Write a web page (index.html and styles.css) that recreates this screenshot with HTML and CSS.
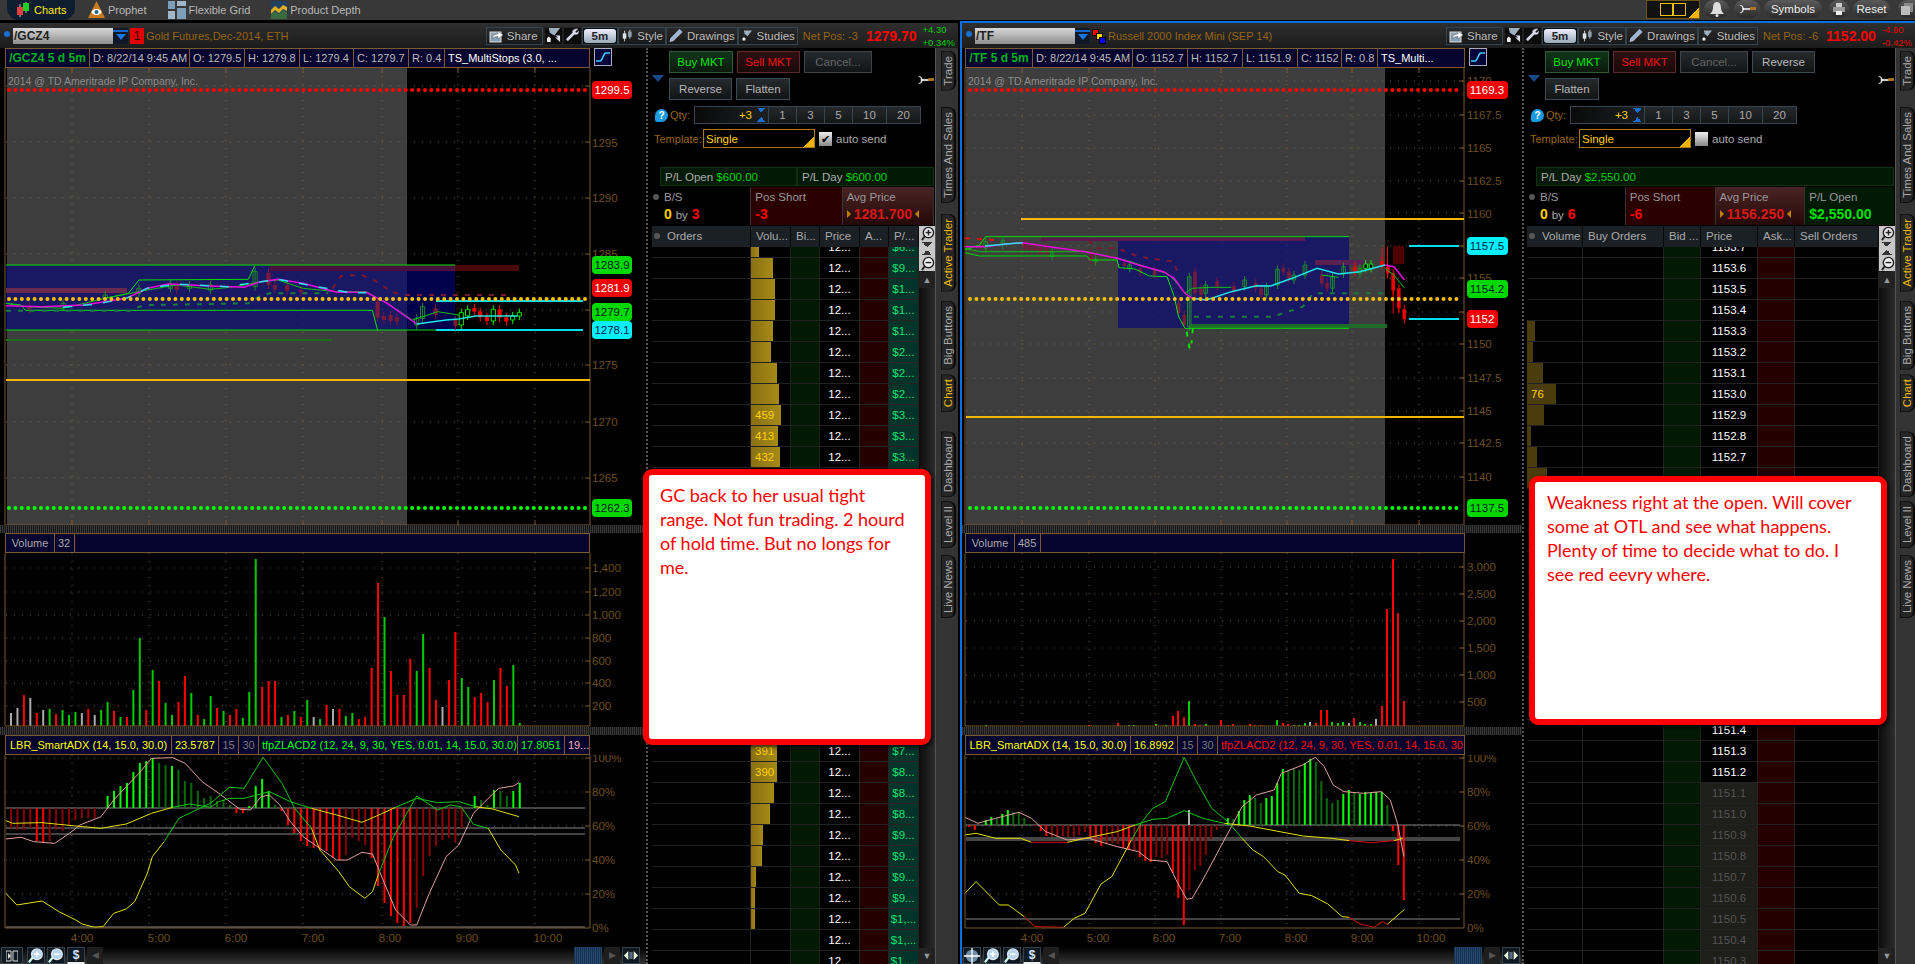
FILE: index.html
```html
<!DOCTYPE html>
<html>
<head>
  <meta charset="utf-8">
  <title>Charts</title>
  <link rel="stylesheet" href="styles.css">
</head>
<body>
  <svg class="defs">
    <symbol id="i-share" viewBox="0 0 14 14"><rect x="1" y="3" width="11" height="10" fill="#8ba0b0" stroke="#ddd"/><path d="M3 10c1-4 3-5 6-5V2l5 4-5 4V7.500C6 7.500 5 8 3 10z" fill="#fff" stroke="#456" stroke-width=".5"/></symbol>
    <symbol id="i-flask" viewBox="0 0 16 16"><path d="M4 1h11L9 9 5 6z" fill="#9fb0bc"/><path d="M4 10l2 2v3H2v-3z" fill="#eee"/></symbol>
    <symbol id="i-tools" viewBox="0 0 16 16"><path d="M3 0h12L9 8 4 5z" fill="#9fb0bc"/><path d="M3 9l2 2v4H1v-4z" fill="#eee"/><path d="M15 15l-5-5h3l-3-2h5z" fill="#dde"/></symbol>
    <symbol id="i-wrench" viewBox="0 0 16 16"><path d="M14 1l-3 3 1 1 3-2c0 3-2 5-5 4l-7 7-2-2 7-7c-1-2 2-5 6-4z" fill="#dde" stroke="#667" stroke-width=".5"/></symbol>
    <symbol id="i-candle" viewBox="0 0 14 14"><path d="M4 1v12M10 0v10" stroke="#cdd"/><rect x="2" y="4" width="4" height="6" fill="#dce4ea"/><rect x="8" y="2" width="4" height="6" fill="#8fa3b0"/></symbol>
    <symbol id="i-pencil" viewBox="0 0 16 16"><path d="M12 1l3 3-10 10-4 1 1-4z" fill="#9db4cf" stroke="#dde" stroke-width=".6"/></symbol>
    <symbol id="i-curve" viewBox="0 0 18 18"><rect x=".5" y=".5" width="17" height="17" fill="#04043a" stroke="#aab"/><path d="M2 13h4c3 0 3-8 6-8h4" fill="none" stroke="#3ad0ff" stroke-width="1.500"/></symbol>
    <symbol id="i-plus" viewBox="0 0 16 16"><circle cx="9" cy="7" r="5.500" fill="#eee" stroke="#222" stroke-width="1.500"/><path d="M6 7h6M9 4v6" stroke="#222" stroke-width="1.500"/><path d="M5 11l-3 4" stroke="#222" stroke-width="2"/></symbol>
    <symbol id="i-minus" viewBox="0 0 16 16"><circle cx="9" cy="7" r="5.500" fill="#eee" stroke="#222" stroke-width="1.500"/><path d="M6 7h6" stroke="#222" stroke-width="1.500"/><path d="M5 11l-3 4" stroke="#222" stroke-width="2"/></symbol>
    <symbol id="i-wr2" viewBox="0 0 18 10"><path d="M1 1c3-1 4 1 5 3h7v2H6c-1 2-2 4-5 3l3-2V3z" fill="#fff" stroke="#333" stroke-width=".5"/><rect x="12" y="3" width="6" height="3" fill="#b07820"/></symbol>
    <symbol id="i-mag-p" viewBox="0 0 18 18"><circle cx="10" cy="7" r="6" fill="#b8d4ea" stroke="#dfeaf2" stroke-width="1.500"/><path d="M7 7h6M10 4v6" stroke="#fff" stroke-width="2"/><path d="M5 11l-4 5" stroke="#cfe" stroke-width="2.500"/></symbol>
    <symbol id="i-mag-m" viewBox="0 0 18 18"><circle cx="10" cy="7" r="6" fill="#b8d4ea" stroke="#dfeaf2" stroke-width="1.500"/><path d="M7 7h6" stroke="#fff" stroke-width="2"/><path d="M5 11l-4 5" stroke="#cfe" stroke-width="2.500"/></symbol>
    <symbol id="i-cross" viewBox="0 0 18 18"><circle cx="9" cy="9" r="7" fill="#6f8da5"/><path d="M9 0v18M0 9h18" stroke="#fff" stroke-width="1.500"/></symbol>
    <symbol id="i-arrows" viewBox="0 0 18 12"><path d="M6 1v10L1 6zM12 1v10l5-5z" fill="#e4f2d8"/><path d="M8 2v8M10 2v8" stroke="#9ac"/></symbol>
  </svg>

  <div class="topbar">
    <a class="nav nav-on"><svg width="16" height="16" viewBox="0 0 16 16"><path d="M5 2v13M11 0v11" stroke="#bbb"/><rect x="2" y="5" width="6" height="8" fill="#e04040"/><rect x="8" y="1" width="6" height="8" fill="#20d020"/></svg>Charts</a>
    <a class="nav"><svg width="17" height="18" viewBox="0 0 17 18"><path d="M8.500 0L17 17H0z" fill="#c87a20"/><ellipse cx="8.500" cy="11" rx="5" ry="3" fill="#fff"/><circle cx="8.500" cy="11" r="2" fill="#268"/></svg>Prophet</a>
    <a class="nav"><svg width="18" height="18" viewBox="0 0 18 18"><rect width="7" height="8" fill="#7f9fb8"/><rect x="9" width="9" height="5" fill="#9fb6c8"/><rect y="10" width="7" height="8" fill="#9fb6c8"/><rect x="9" y="7" width="9" height="11" fill="#7f9fb8"/></svg>Flexible Grid</a>
    <a class="nav"><svg width="16" height="18" viewBox="0 0 16 18"><rect width="16" height="18" fill="#204060"/><path d="M0 9l4-4 4 3 4-4 4 2v4l-4-2-4 4-4-3-4 4z" fill="#e0b020"/><path d="M0 18v-5l4-3 4 3 4-4 4 2v7z" fill="#3a6a40"/></svg>Product Depth</a>
    <span class="grow"></span>
    <div class="layout-pick"><i></i><i></i></div>
    <span class="round rd-bell"><svg width="14" height="15" viewBox="0 0 14 15"><path d="M7 0c3 0 4 3 4 6 0 3 2 5 3 6H0c1-1 3-3 3-6 0-3 1-6 4-6z" fill="#ddd"/><circle cx="7" cy="13.500" r="1.500" fill="#ddd"/></svg></span>
    <span class="round rd-wr"><svg width="18" height="10"><use href="#i-wr2"/></svg></span>
    <span class="pill pill-sym">Symbols</span>
    <span class="round rd-print"><svg width="12" height="12" viewBox="0 0 12 12"><rect x="3" width="6" height="4" fill="#ccc"/><rect y="4" width="12" height="5" fill="#999"/><rect x="3" y="8" width="6" height="4" fill="#eee"/></svg></span>
    <span class="pill pill-reset">Reset</span>
    <span class="round rd-end"><svg width="12" height="12" viewBox="0 0 12 12"><rect x="3" width="9" height="9" fill="#888"/><rect y="3" width="9" height="9" fill="#bbb"/></svg></span>
  </div>

  <div class="workspace">

    <!-- left window: gold -->
    <div class="window win-left">
      <div class="win-head">
        <span class="link-dot"></span>
        <div class="sym-box">/GCZ4</div><span class="sym-drop"></span>
        <span class="tag-one">1</span>
        <span class="sym-title">Gold Futures,Dec-2014, ETH</span>
        <span class="grow"></span>
        <span class="hbtn hb-share"><svg width="14" height="14"><use href="#i-share"/></svg>Share</span>
        <span class="hbtn hbtn-ico"><svg width="15" height="15"><use href="#i-tools"/></svg></span>
        <span class="hbtn hbtn-ico"><svg width="15" height="15"><use href="#i-wrench"/></svg></span>
        <span class="hbtn hbtn-time"><b>5m</b></span>
        <span class="hbtn hb-style"><svg width="14" height="14"><use href="#i-candle"/></svg>Style</span>
        <span class="hbtn hb-draw"><svg width="15" height="15"><use href="#i-pencil"/></svg>Drawings</span>
        <span class="hbtn hb-stud"><svg width="15" height="15"><use href="#i-flask"/></svg>Studies</span>
        <span class="netpos">Net Pos: -3</span>
        <span class="last">1279.70</span>
        <span class="chg chg-up">+4.30<br>+0.34%</span>
      </div>
      <div class="win-body">
        <section class="chart-col">
          <div class="info-row">
            <div class="study-bar">
              <span class="c-sym w-l1">/GCZ4 5 d 5m</span><span class="w-l2">D: 8/22/14 9:45 AM</span><span class="w-l3">O: 1279.5</span><span class="w-l3">H: 1279.8</span><span class="w-l4">L: 1279.4</span><span class="w-l3">C: 1279.7</span><span class="w-l5">R: 0.4</span><span class="c-white grow">TS_MultiStops (3.0, ...</span>
            </div>
            <svg class="study-ico" width="18" height="18"><use href="#i-curve"/></svg>
          </div>

          <svg class="pane" width="646" height="457" viewBox="0 68 646 457">
            <rect x="7" y="68" width="400" height="457" fill="#3e3e3e"/>
            <path class="grid" d="M6 86H590M6 142H590M6 198H590M6 254H590M6 310H590M6 365H590M6 422H590M6 478H590M72 68V525M149 68V525M226 68V525M303 68V525M382 68V525M458 68V525M535 68V525"/>
            <path class="frame" d="M590 68V525H5V68M585 86h5M585 142h5M585 198h5M585 254h5M585 310h5M585 365h5M585 422h5M585 478h5M72 68v5M149 68v5M226 68v5M303 68v5M382 68v5M458 68v5M535 68v5M72 525v-5M149 525v-5M226 525v-5M303 525v-5M382 525v-5M458 525v-5M535 525v-5"/>
            <text class="copy" x="8" y="85">2014 @ TD Ameritrade IP Company, Inc.</text>
            <line class="dots" x1="9" y1="90" x2="585" y2="90" stroke="#ff0000"/>
            <rect x="6" y="265" width="449" height="65" fill="#000080" opacity=".6"/>
            <rect x="6" y="288" width="121" height="5" fill="#6a2a50"/>
            <rect x="270" y="265" width="185" height="6" fill="#4a1040"/>
            <rect x="455" y="265" width="64" height="6" fill="#4a0808"/>
            <rect x="6" y="339" width="326" height="2" fill="#1d6b1d"/>
            <path class="ln ln-g" d="M6 265H455M6 330H455"/>
            <path class="ln ln-c" d="M436 301H583M436 330H583"/>
            <g transform="translate(0,240) scale(.4209,.3333)">
              <g data-candles="L"></g>
              <polyline class="ln ln-g" points="14,190 50,195 60,211 885,211 897,271"/>
              <polyline class="ln ln-g" points="250,175 305,160 330,120 590,118 605,78"/>
              <polyline class="dash dash-r" points="790,145 810,108 860,105 895,125 930,155 960,165 1220,165"/>
              <polyline class="dash dash-g" points="14,212 310,212 330,200 360,195 590,190 615,170 640,160 780,160"/>
              <polyline class="ln ln-g1" points="14,190 60,200 150,205 250,175 350,150 420,135 500,148 560,140 620,125 660,120 720,145 800,155 870,155 920,190 980,240 1040,215 1090,225"/>
              <polyline class="ln ln-m" points="14,197 100,200 200,195 300,175 350,145 400,132 500,138 580,142 620,125 660,118 720,130 800,157 870,157 920,190 990,252"/>
              <polyline class="ln ln-c3" points="150,202 230,192 300,175 350,145 420,132 540,140 620,125 660,118 830,158 870,158"/>
              <polyline class="ln ln-c2" points="990,252 1060,240 1090,237 1130,228 1230,228"/>
            </g>
            <line class="dots" x1="9" y1="299" x2="585" y2="299" stroke="#ffc000"/>
            <line class="ln ln-y" x1="6" y1="380" x2="590" y2="380"/>
            <line class="dots" x1="9" y1="508" x2="585" y2="508" stroke="#00ff00"/>
            <g class="axis">
              <text x="592" y="147">1295</text><text x="592" y="202">1290</text><text x="592" y="258">1285</text><text x="592" y="369">1275</text><text x="592" y="426">1270</text><text x="592" y="482">1265</text>
            </g>
            <g class="badge b-red"><rect x="592" y="81" width="40" height="18" rx="4"/><text x="612" y="94">1299.5</text></g>
            <g class="badge b-green"><rect x="592" y="256" width="40" height="18" rx="4"/><text x="612" y="269">1283.9</text></g>
            <g class="badge b-red"><rect x="592" y="279" width="40" height="18" rx="4"/><text x="612" y="292">1281.9</text></g>
            <g class="badge b-green"><rect x="592" y="303" width="40" height="18" rx="4"/><text x="612" y="316">1279.7</text></g>
            <g class="badge b-cyan"><rect x="592" y="321" width="40" height="18" rx="4"/><text x="612" y="334">1278.1</text></g>
            <g class="badge b-green"><rect x="592" y="499" width="40" height="18" rx="4"/><text x="612" y="512">1262.3</text></g>
          </svg>

          <div class="splitter"></div>
          <div class="study-bar"><span class="c-grey w-v1">Volume</span><span class="c-grey w-v2">32</span></div>

          <svg class="pane" width="646" height="174" viewBox="0 553 646 174">
            <path class="grid" d="M6 568H590M6 592H590M6 615H590M6 638H590M6 661H590M6 683H590M6 706H590M72 553V727M149 553V727M226 553V727M303 553V727M382 553V727M458 553V727M535 553V727"/>
            <g data-bars="L-vol"></g>
            <path class="frame" d="M590 553V726H5V553M585 568h5M585 592h5M585 615h5M585 638h5M585 661h5M585 683h5M585 706h5"/>
            <g class="axis">
              <text x="592" y="572">1,400</text><text x="592" y="596">1,200</text><text x="592" y="619">1,000</text><text x="592" y="642">800</text><text x="592" y="665">600</text><text x="592" y="687">400</text><text x="592" y="710">200</text>
            </g>
          </svg>

          <div class="splitter"></div>
          <div class="study-bar">
            <span class="c-yel w-a1">LBR_SmartADX (14, 15.0, 30.0)</span><span class="c-yel w-a2">23.5787</span><span class="c-dim w-a3">15</span><span class="c-dim w-a3">30</span><span class="c-grn w-a4">tfpZLACD2 (12, 24, 9, 30, YES, 0.01, 14, 15.0, 30.0)</span><span class="c-grn w-a2">17.8051</span><span class="c-pink grow">19...</span>
          </div>

          <svg class="pane" width="646" height="192" viewBox="0 755 646 192">
            <path class="grid" d="M6 758H590M6 792H590M6 826H590M6 860H590M6 894H590M72 755V928M149 755V928M226 755V928M303 755V928M382 755V928M458 755V928M535 755V928"/>
            <path class="ln ln-grey" d="M6 808H585M6 828H585M6 834H585M6 927H585"/>
            <g data-bars="L-adx"></g>
            <g transform="translate(0,730) scale(.4209,.3333)">
              <polyline class="ln ln-pk" points="14,327 50,322 80,335 130,340 165,310 190,285 240,260 270,210 300,170 330,130 360,85 410,83 440,100 480,155 520,190 570,238 595,240 620,200 640,195 665,225 690,275 720,320 760,355 800,390 825,390 860,367 885,372 910,450 940,540 975,585 990,585 1020,490 1060,380 1090,345 1125,250 1160,205 1185,175 1220,168 1233,158"/>
              <polyline class="ln ln-y2" points="14,272 30,280 100,278 180,288 240,295 300,282 360,250 410,232"/>
              <polyline class="ln ln-g2" points="410,232 450,222 500,232 520,215 545,205 580,205 610,195 640,185 690,215 740,235"/>
              <polyline class="ln ln-y2" points="740,235 800,255 860,277 900,255 940,232"/>
              <polyline class="ln ln-g2" points="940,232 990,205 1040,218 1090,215 1130,230"/>
              <polyline class="ln ln-y2" points="1130,230 1170,237 1233,260"/>
              <polyline class="ln ln-y2" points="14,490 40,525 100,513 140,545 180,570 195,582 225,592 245,590 270,550 300,537 320,515 350,430 362,380 390,335"/>
              <polyline class="ln ln-g2" points="390,335 425,265 500,220 545,172 580,175 625,82 670,160 700,235 740,295"/>
              <polyline class="ln ln-y2" points="740,295 760,360 805,425 830,470 867,505 885,485 900,430"/>
              <polyline class="ln ln-g2" points="900,430 935,320 990,198 1040,240 1070,225 1095,230 1125,283 1160,295"/>
              <polyline class="ln ln-y2" points="1160,295 1190,360 1225,405 1233,430"/>
            </g>
            <path class="frame" d="M590 755V928H5V755M585 758h5M585 792h5M585 826h5M585 860h5M585 894h5"/>
            <g class="axis">
              <text x="592" y="762">100%</text><text x="592" y="796">80%</text><text x="592" y="830">60%</text><text x="592" y="864">40%</text><text x="592" y="898">20%</text><text x="592" y="932">0%</text>
              <text x="82" y="942" text-anchor="middle">4:00</text><text x="159" y="942" text-anchor="middle">5:00</text><text x="236" y="942" text-anchor="middle">6:00</text><text x="313" y="942" text-anchor="middle">7:00</text><text x="390" y="942" text-anchor="middle">8:00</text><text x="467" y="942" text-anchor="middle">9:00</text><text x="548" y="942" text-anchor="middle">10:00</text>
            </g>
          </svg>

          <div class="chart-foot">
            <span class="foot-btn foot-expand"><svg width="12" height="12" viewBox="0 0 12 12"><path d="M0 1h5v10H0zM7 1h5v10H7z" fill="none" stroke="#ddd"/><path d="M2 3l3 3-3 3z" fill="#ddd"/></svg></span>
            <span class="foot-btn"><svg width="16" height="16"><use href="#i-mag-p"/></svg></span>
            <span class="foot-btn"><svg width="16" height="16"><use href="#i-mag-m"/></svg></span>
            <span class="foot-btn foot-dollar">$</span>
            <span class="foot-arrow">◀</span>
            <span class="grow"></span>
            <span class="foot-hatch"></span>
            <span class="foot-arrow">▶</span>
            <span class="foot-btn"><svg width="17" height="11"><use href="#i-arrows"/></svg></span>
          </div>
        </section>

        <section class="trade-col tc-left">
          <i class="drop-tri"></i>
          <svg class="trade-wr" width="17" height="10"><use href="#i-wr2"/></svg>
          <div class="trade-row r-first">
            <span class="tbtn t-buy w-buy">Buy MKT</span><span class="tbtn t-sell w-sell">Sell MKT</span><span class="tbtn t-cancel w-cancel">Cancel...</span>
          </div>
          <div class="trade-row r-second">
            <span class="tbtn w-rev">Reverse</span><span class="tbtn w-flat">Flatten</span>
          </div>
          <div class="qty-row">
            <span class="help-ico">?</span><span class="lbl">Qty:</span>
            <div class="qty-in">+3<span class="spin"></span></div>
            <span class="qbtn">1</span><span class="qbtn">3</span><span class="qbtn">5</span><span class="qbtn q-w">10</span><span class="qbtn q-w">20</span>
          </div>
          <div class="tpl-row">
            <span class="lbl">Template:</span><div class="tpl-sel">Single</div>
            <span class="check check-on">✔</span><span class="auto">auto send</span>
          </div>
          <div class="pl-row">
            <span class="pl-cell">P/L Open <em>$600.00</em></span><span class="pl-cell">P/L Day <em>$600.00</em></span>
          </div>
          <div class="stat-wrap">
            <i class="grey-dot"></i>
            <div class="stat-row">
              <div class="stat"><small>B/S</small><b><span class="s-y">0</span> <u>by</u> <span class="s-r">3</span></b></div>
              <div class="stat st-short"><small>Pos Short</small><b class="s-r">-3</b></div>
              <div class="stat st-avg"><small>Avg Price</small><b class="s-r avg-val">1281.700</b></div>
            </div>
          </div>
          <div class="ladder" data-ladder="L"></div>
        </section>

        <nav class="side-tabs">
          <span class="tab">Trade</span>
          <span class="tab">Times And Sales</span>
          <span class="tab tab-on">Active Trader</span>
          <span class="tab">Big Buttons</span>
          <span class="tab tab-on">Chart</span>
          <span class="tab">Dashboard</span>
          <span class="tab">Level II</span>
          <span class="tab">Live News</span>
        </nav>
      </div>
    </div>

    <!-- right window: russell -->
    <div class="window win-right">
      <div class="win-head">
        <span class="link-dot"></span>
        <div class="sym-box">/TF</div><span class="sym-drop"></span>
        <span class="tag-sq"><i></i><i></i><i></i></span>
        <span class="sym-title">Russell 2000 Index Mini (SEP 14)</span>
        <span class="grow"></span>
        <span class="hbtn hb-share"><svg width="14" height="14"><use href="#i-share"/></svg>Share</span>
        <span class="hbtn hbtn-ico"><svg width="15" height="15"><use href="#i-tools"/></svg></span>
        <span class="hbtn hbtn-ico"><svg width="15" height="15"><use href="#i-wrench"/></svg></span>
        <span class="hbtn hbtn-time"><b>5m</b></span>
        <span class="hbtn hb-style"><svg width="14" height="14"><use href="#i-candle"/></svg>Style</span>
        <span class="hbtn hb-draw"><svg width="15" height="15"><use href="#i-pencil"/></svg>Drawings</span>
        <span class="hbtn hb-stud"><svg width="15" height="15"><use href="#i-flask"/></svg>Studies</span>
        <span class="netpos">Net Pos: -6</span>
        <span class="last">1152.00</span>
        <span class="chg chg-dn">-4.90<br>-0.42%</span>
      </div>
      <div class="win-body">
        <section class="chart-col">
          <div class="info-row">
            <div class="study-bar">
              <span class="c-sym w-r1">/TF 5 d 5m</span><span class="w-l2">D: 8/22/14 9:45 AM</span><span class="w-l3">O: 1152.7</span><span class="w-l3">H: 1152.7</span><span class="w-l3">L: 1151.9</span><span class="w-r2">C: 1152</span><span class="w-l5">R: 0.8</span><span class="c-white grow">TS_Multi...</span>
            </div>
            <svg class="study-ico" width="18" height="18"><use href="#i-curve"/></svg>
          </div>

          <svg class="pane" width="560" height="457" viewBox="962 68 560 457">
            <rect x="966" y="68" width="419" height="457" fill="#3e3e3e"/>
            <path class="grid" d="M966 81H1464M966 115H1464M966 148H1464M966 181H1464M966 213H1464M966 246H1464M966 278H1464M966 312H1464M966 344H1464M966 378H1464M966 411H1464M966 443H1464M966 477H1464M1022 68V525M1089 68V525M1155 68V525M1221 68V525M1287 68V525M1352 68V525M1419 68V525"/>
            <path class="frame" d="M1464 68V525H965V68M1459 81h5M1459 115h5M1459 148h5M1459 181h5M1459 213h5M1459 246h5M1459 278h5M1459 312h5M1459 344h5M1459 378h5M1459 411h5M1459 443h5M1459 477h5M1022 68v5M1089 68v5M1155 68v5M1221 68v5M1287 68v5M1352 68v5M1419 68v5M1022 525v-5M1089 525v-5M1155 525v-5M1221 525v-5M1287 525v-5M1352 525v-5M1419 525v-5"/>
            <text class="copy" x="968" y="85">2014 @ TD Ameritrade IP Company, Inc.</text>
            <line class="dots" x1="970" y1="90" x2="1460" y2="90" stroke="#ff0000"/>
            <rect x="1118" y="236" width="231" height="92" fill="#000080" opacity=".6"/>
            <rect x="1041" y="237" width="264" height="4" fill="#5a1a50"/>
            <rect x="1315" y="260" width="50" height="5" fill="#5a2050"/>
            <rect x="1190" y="324" width="197" height="4" fill="#1e6a2a"/>
            <rect x="1393" y="246" width="11" height="18" fill="#500000"/>
            <path class="ln ln-c" d="M1409 246H1459M1409 319H1459"/>
            <line class="ln ln-y" x1="1021" y1="219" x2="1464" y2="219"/>
            <line class="ln ln-y" x1="966" y1="417" x2="1464" y2="417"/>
            <g transform="translate(960,200) scale(.3571,.3333)">
              <g data-candles="R"></g>
              <polyline class="ln ln-g" points="14,158 55,168 355,168 365,180 440,180 445,203 490,207 530,228 580,230 600,290 612,350 630,385 1090,385"/>
              <polyline class="ln ln-g" points="14,150 55,135 72,110 1090,110"/>
              <polyline class="dash dash-r" points="360,120 380,145 440,145 500,170 600,185 610,225"/>
              <polyline class="dash dash-rb" points="14,115 100,120"/>
              <polyline class="dash dash-g" points="655,350 880,350 890,345 960,320 990,280 1200,280"/>
              <polyline class="dash dash-bg" points="635,395 640,430 645,460"/>
              <polyline class="dash dash-bg" points="652,385 648,430"/>
              <polyline class="ln ln-g1" points="14,145 55,155 355,155 440,175 480,185 530,205 580,220 600,240 630,280 650,265 700,262 760,262"/>
              <polyline class="ln ln-g1" points="1013,225 1060,232"/>
              <polyline class="ln ln-g1" points="1190,205 1215,225 1245,265"/>
              <polyline class="ln ln-m" points="14,140 70,140 130,132 175,128 250,140 350,155 440,175 500,195 570,215 600,235 630,280 650,295 690,300"/>
              <polyline class="ln ln-m" points="1190,195 1215,200 1245,240"/>
              <polyline class="ln ln-c2" points="70,138 130,132 175,128"/>
              <polyline class="ln ln-c2" points="650,295 690,300 760,275 830,257 870,258 930,235 1000,205 1060,222 1120,215 1190,195"/>
            </g>
            <line class="dots" x1="970" y1="299" x2="1460" y2="299" stroke="#ffc000"/>
            <line class="dots" x1="970" y1="508" x2="1460" y2="508" stroke="#00ff00"/>
            <g class="axis">
              <text x="1467" y="85">1170</text><text x="1467" y="119">1167.5</text><text x="1467" y="152">1165</text><text x="1467" y="185">1162.5</text><text x="1467" y="218">1160</text><text x="1467" y="282">1155</text><text x="1467" y="348">1150</text><text x="1467" y="382">1147.5</text><text x="1467" y="415">1145</text><text x="1467" y="447">1142.5</text><text x="1467" y="481">1140</text>
            </g>
            <g class="badge b-red"><rect x="1467" y="81" width="41" height="18" rx="4"/><text x="1487" y="94">1169.3</text></g>
            <g class="badge b-cyan"><rect x="1467" y="237" width="41" height="18" rx="4"/><text x="1487" y="250">1157.5</text></g>
            <g class="badge b-green"><rect x="1467" y="280" width="41" height="18" rx="4"/><text x="1487" y="293">1154.2</text></g>
            <g class="badge b-red"><rect x="1467" y="310" width="31" height="18" rx="4"/><text x="1482" y="323">1152</text></g>
            <g class="badge b-green"><rect x="1467" y="499" width="41" height="18" rx="4"/><text x="1487" y="512">1137.5</text></g>
          </svg>

          <div class="splitter"></div>
          <div class="study-bar"><span class="c-grey w-v1">Volume</span><span class="c-grey w-v3">485</span></div>

          <svg class="pane" width="560" height="174" viewBox="962 553 560 174">
            <path class="grid" d="M966 567H1464M966 594H1464M966 621H1464M966 648H1464M966 675H1464M966 702H1464M1022 553V727M1089 553V727M1155 553V727M1221 553V727M1287 553V727M1352 553V727M1419 553V727"/>
            <g data-bars="R-vol"></g>
            <path class="frame" d="M1464 553V726H965V553M1459 567h5M1459 594h5M1459 621h5M1459 648h5M1459 675h5M1459 702h5"/>
            <g class="axis">
              <text x="1467" y="571">3,000</text><text x="1467" y="598">2,500</text><text x="1467" y="625">2,000</text><text x="1467" y="652">1,500</text><text x="1467" y="679">1,000</text><text x="1467" y="706">500</text>
            </g>
          </svg>

          <div class="splitter"></div>
          <div class="study-bar">
            <span class="c-yel w-b1">LBR_SmartADX (14, 15.0, 30.0)</span><span class="c-yel w-b2">16.8992</span><span class="c-dim w-a3">15</span><span class="c-dim w-a3">30</span><span class="c-red grow">tfpZLACD2 (12, 24, 9, 30, YES, 0.01, 14, 15.0, 30...</span>
          </div>

          <svg class="pane" width="560" height="192" viewBox="962 755 560 192">
            <path class="grid" d="M966 758H1464M966 792H1464M966 826H1464M966 860H1464M966 894H1464M1022 755V928M1089 755V928M1155 755V928M1221 755V928M1287 755V928M1352 755V928M1419 755V928"/>
            <path class="ln ln-grey" d="M966 825H1460M966 838H1460M966 840H1460M966 919H1460"/>
            <g data-bars="R-adx"></g>
            <rect x="1188" y="810" width="2" height="15" fill="#b0b0b0"/>
            <g transform="translate(960,530) scale(.3571,.3333)">
              <polyline class="ln ln-pk" points="14,862 50,880 100,865 165,847 200,865 240,905 300,930 360,925 440,950 500,965 530,990 580,995 610,1060 635,1108 650,1105 680,1050 720,970 760,890 790,830 830,795 880,780 900,730 960,705 995,682 1020,710 1045,765 1075,785 1130,790 1180,785 1205,810 1225,880 1243,980"/>
              <polyline class="ln ln-y2" points="14,915 45,910 100,925 170,925 200,937"/>
              <polyline class="ln ln-r2" points="200,937 300,937"/>
              <polyline class="ln ln-y2" points="300,937 350,925 440,905 490,885"/>
              <polyline class="ln ln-g2" points="490,885 540,868 580,865 628,842 680,865 740,880"/>
              <polyline class="ln ln-y2" points="740,880 810,888 960,918 1040,925 1090,932"/>
              <polyline class="ln ln-r2" points="1090,932 1150,938 1215,932"/>
              <polyline class="ln ln-y2" points="1215,932 1240,925"/>
              <polyline class="ln ln-y2" points="14,1090 45,1055 110,1125 135,1125 180,1160"/>
              <polyline class="ln ln-r2" points="180,1160 210,1190 290,1192"/>
              <polyline class="ln ln-y2" points="290,1192 320,1165 350,1150 395,1062 425,1040 480,930"/>
              <polyline class="ln ln-g2" points="480,930 510,875 540,835 575,815 628,682 660,750 705,835 750,875 790,925"/>
              <polyline class="ln ln-y2" points="790,925 820,960 850,980 890,1025 910,1035 950,1090 985,1097 1030,1122 1070,1160 1090,1162"/>
              <polyline class="ln ln-r2" points="1090,1162 1120,1182 1160,1192 1183,1175 1197,1183"/>
              <polyline class="ln ln-y2" points="1197,1183 1245,1138"/>
            </g>
            <path class="frame" d="M1464 755V928H965V755M1459 758h5M1459 792h5M1459 826h5M1459 860h5M1459 894h5"/>
            <g class="axis">
              <text x="1467" y="762">100%</text><text x="1467" y="796">80%</text><text x="1467" y="830">60%</text><text x="1467" y="864">40%</text><text x="1467" y="898">20%</text><text x="1467" y="932">0%</text>
              <text x="1032" y="942" text-anchor="middle">4:00</text><text x="1098" y="942" text-anchor="middle">5:00</text><text x="1164" y="942" text-anchor="middle">6:00</text><text x="1230" y="942" text-anchor="middle">7:00</text><text x="1296" y="942" text-anchor="middle">8:00</text><text x="1362" y="942" text-anchor="middle">9:00</text><text x="1431" y="942" text-anchor="middle">10:00</text>
            </g>
          </svg>

          <div class="chart-foot">
            <span class="foot-btn"><svg width="16" height="16"><use href="#i-cross"/></svg></span>
            <span class="foot-btn"><svg width="16" height="16"><use href="#i-mag-p"/></svg></span>
            <span class="foot-btn"><svg width="16" height="16"><use href="#i-mag-m"/></svg></span>
            <span class="foot-btn foot-dollar">$</span>
            <span class="foot-arrow">◀</span>
            <span class="grow"></span>
            <span class="foot-hatch"></span>
            <span class="foot-arrow">▶</span>
            <span class="foot-btn"><svg width="17" height="11"><use href="#i-arrows"/></svg></span>
          </div>
        </section>

        <section class="trade-col tc-right">
          <i class="drop-tri"></i>
          <svg class="trade-wr" width="17" height="10"><use href="#i-wr2"/></svg>
          <div class="trade-row r-first">
            <span class="tbtn t-buy w-buy">Buy MKT</span><span class="tbtn t-sell w-sell">Sell MKT</span><span class="tbtn t-cancel w-cancel">Cancel...</span><span class="tbtn w-rev">Reverse</span>
          </div>
          <div class="trade-row r-second">
            <span class="tbtn w-flat">Flatten</span>
          </div>
          <div class="qty-row">
            <span class="help-ico">?</span><span class="lbl">Qty:</span>
            <div class="qty-in">+3<span class="spin"></span></div>
            <span class="qbtn">1</span><span class="qbtn">3</span><span class="qbtn">5</span><span class="qbtn q-w">10</span><span class="qbtn q-w">20</span>
          </div>
          <div class="tpl-row">
            <span class="lbl">Template:</span><div class="tpl-sel">Single</div>
            <span class="check"></span><span class="auto">auto send</span>
          </div>
          <div class="pl-row">
            <span class="pl-cell">P/L Day <em>$2,550.00</em></span>
          </div>
          <div class="stat-wrap">
            <i class="grey-dot"></i>
            <div class="stat-row">
              <div class="stat"><small>B/S</small><b><span class="s-y">0</span> <u>by</u> <span class="s-r">6</span></b></div>
              <div class="stat st-short"><small>Pos Short</small><b class="s-r">-6</b></div>
              <div class="stat st-avg"><small>Avg Price</small><b class="s-r avg-val">1156.250</b></div>
              <div class="stat st-open"><small>P/L Open</small><b class="s-g">$2,550.00</b></div>
            </div>
          </div>
          <div class="ladder" data-ladder="R"></div>
        </section>

        <nav class="side-tabs">
          <span class="tab">Trade</span>
          <span class="tab">Times And Sales</span>
          <span class="tab tab-on">Active Trader</span>
          <span class="tab">Big Buttons</span>
          <span class="tab tab-on">Chart</span>
          <span class="tab">Dashboard</span>
          <span class="tab">Level II</span>
          <span class="tab">Live News</span>
        </nav>
      </div>
    </div>
  </div>

  <div class="note note-left">GC back to her usual tight range. Not fun trading. 2 hourd of hold time. But no longs for me.</div>
  <div class="note note-right">Weakness right at the open. Will cover some at OTL and see what happens. Plenty of time to decide what to do. I see red eevry where.</div>

  <script src="script.js"></script>
</body>
</html>
```

FILE: styles.css
```css
* { box-sizing: border-box; }

html, body {
  margin: 0;
  width: 1915px;
  height: 964px;
  overflow: hidden;
  background: #000;
  font-family: "Liberation Sans", Arial, sans-serif;
  font-size: 11.5px;
  color: #bbb;
}

.defs { position: absolute; width: 0; height: 0; }
.grow { flex: 1; }

/* top bar */
.topbar {
  height: 20px;
  display: flex;
  align-items: flex-start;
  background: #383838;
  padding-left: 7px;
}
.nav {
  display: flex;
  align-items: center;
  gap: 3px;
  height: 20px;
  margin-right: 21px;
  font-size: 11px;
  color: #b8b8b8;
}
.nav-on {
  width: 68px;
  padding-left: 8px;
  margin-right: 13px;
  background: #0e1e30;
  border-radius: 0 0 12px 12px;
  color: #ffe600;
}
.layout-pick {
  display: flex;
  align-items: center;
  justify-content: center;
  width: 54px;
  height: 19px;
  margin-right: 4px;
  background: linear-gradient(135deg, #111 85%, #f0b400 85%);
  border: 1px solid #6a5410;
}
.layout-pick i { width: 13px; height: 13px; border: 1px solid #f0c000; }
.round, .pill {
  display: flex;
  align-items: center;
  justify-content: center;
  flex: none;
  height: 18px;
  border-radius: 9px;
  background: linear-gradient(#5a5a5a, #2a2a2a);
  color: #eee;
  font-size: 11.5px;
}
.rd-bell { width: 25px; margin-right: 5px; }
.rd-wr { width: 26px; margin-right: 4px; }
.pill-sym { width: 58px; margin-right: 7px; }
.rd-print { width: 20px; margin-right: 4px; }
.pill-reset { width: 37px; margin-right: 8px; }
.rd-end { width: 17px; border-radius: 9px 0 0 9px; }

/* windows */
.workspace { display: flex; margin-top: 1px; }
.window { height: 943px; display: flex; flex-direction: column; border-top: 2px solid #000; }
.win-left { width: 958px; }
.win-right { width: 955px; margin-left: 2px; border-top-color: #0a6fe0; border-left: 2px solid #0a6fe0; }
.win-head {
  height: 25px;
  flex: none;
  display: flex;
  align-items: center;
  background: linear-gradient(#2e2e2e, #1c1c1c);
  padding-right: 3px;
}
.link-dot {
  width: 6px;
  height: 6px;
  margin: 0 3px 4px 4px;
  border-radius: 50%;
  background: #1a6fd0;
}
.sym-box {
  width: 100px;
  height: 16px;
  padding-left: 1px;
  line-height: 16px;
  font-size: 12px;
  font-weight: bold;
  color: #222;
  background: linear-gradient(#d8d8d8, #8e8e8e);
}
.sym-drop {
  width: 15px;
  height: 16px;
  margin-right: 2px;
  background: linear-gradient(to bottom, transparent 2px, #1668c8 2px, #1668c8 4px, transparent 4px), #101828;
  position: relative;
}
.sym-drop::after {
  content: "";
  position: absolute;
  left: 3px;
  top: 6px;
  border: 5px solid transparent;
  border-top: 6px solid #1a78e0;
  border-bottom: 0;
}
.tag-one {
  width: 14px;
  height: 16px;
  margin-right: 2px;
  text-align: center;
  line-height: 16px;
  background: #e00000;
  color: #300;
  font-size: 12px;
}
.tag-sq {
  position: relative;
  width: 14px;
  height: 16px;
  margin-right: 2px;
}
.tag-sq i { position: absolute; width: 7px; height: 7px; border: 1px solid #000; }
.tag-sq i:nth-child(1) { left: 0; top: 1px; background: #f00; }
.tag-sq i:nth-child(2) { left: 4px; top: 5px; background: #fd0; }
.tag-sq i:nth-child(3) { left: 7px; top: 9px; background: #00f; }
.sym-title { color: #96640f; font-size: 11px; white-space: nowrap; }
.hbtn {
  display: flex;
  align-items: center;
  gap: 4px;
  flex: none;
  height: 18px;
  padding: 0 2px;
  background: linear-gradient(#2a2a2a, #181818);
  border: 1px solid #35454f;
  color: #bbb;
  font-size: 11.5px;
  white-space: nowrap;
}
.hb-share { width: 57px; margin-right: 1px; }
.hbtn-ico { padding: 0; width: 19px; justify-content: center; background: #0c0c0c; border-color: #222; }
.hbtn-time { width: 36px; padding: 0 1px; background: #0c0c0c; }
.hbtn-time b {
  display: block;
  width: 32px;
  height: 14px;
  line-height: 14px;
  text-align: center;
  border-radius: 3px;
  background: linear-gradient(#eef, #9ab);
  color: #222;
}
.hb-style { width: 48px; }
.hb-draw { width: 72px; }
.hb-stud { width: 60px; }
.netpos { margin-left: 5px; color: #96640f; font-size: 11px; white-space: nowrap; }
.last { margin-left: 8px; color: #f00; font-size: 14px; font-weight: bold; }
.chg { margin-left: 6px; font-size: 9.5px; line-height: 13px; white-space: nowrap; }
.chg-up { color: #00d000; }
.chg-dn { color: #e00000; }

.win-body { flex: 1; display: flex; min-height: 0; }

/* chart column */
.chart-col { flex: none; display: flex; flex-direction: column; background: #000; }
.win-left .chart-col { width: 646px; }
.win-right .chart-col { width: 560px; }
.info-row { display: flex; height: 20px; flex: none; }
.study-bar {
  flex: none;
  height: 20px;
  display: flex;
  background: #04042e;
  border: 1px solid #7a5a30;
  color: #bbb;
  font-size: 11px;
  line-height: 18px;
  white-space: nowrap;
}
.study-bar span { border-right: 1px solid #7a5a30; padding: 0 3px; overflow: hidden; flex: none; }
.study-bar span.grow { flex: 1; border-right: 0; }
.win-left .study-bar { width: 585px; margin-left: 5px; }
.win-right .study-bar { width: 500px; margin-left: 3px; }
.study-ico { margin-left: 4px; flex: none; }
.study-bar .c-sym { color: #00b020; font-weight: bold; font-size: 12px; text-align: center; padding: 0; }
.c-white { color: #fff; }
.c-grey { color: #aaa; }
.c-dim { color: #777; }
.c-yel { color: #ff0; }
.c-grn { color: #00ff00; }
.c-red { color: #f00; }
.c-pink { color: #ffb0c0; }
.w-l1 { width: 84px; }
.w-l2 { width: 100px; }
.w-l3 { width: 55px; }
.w-l4 { width: 54px; }
.w-l5 { width: 36px; }
.w-r1 { width: 67px; }
.w-r2 { width: 44px; }
.w-v1 { width: 49px; text-align: center; }
.w-v2 { width: 20px; }
.w-v3 { width: 26px; }
.w-a1 { width: 166px; text-align: center; }
.w-a2 { width: 47px; }
.w-a3 { width: 20px; text-align: center; }
.w-a4 { width: 259px; }
.w-b1 { width: 165px; text-align: center; }
.w-b2 { width: 47px; }

.pane { display: block; flex: none; }
.pane text { font-family: "Liberation Sans", Arial, sans-serif; }
.splitter {
  height: 8px;
  flex: none;
  background: repeating-linear-gradient(90deg, #3a3a3a 0 1px, #151515 1px 2px);
}
.grid { fill: none; stroke: #7a6038; stroke-dasharray: 1 7; }
.frame { fill: none; stroke: #7a5a30; }
.copy { font-size: 10.5px; fill: #8c8c8c; }
.axis text { font-size: 11.5px; fill: #6e4e1e; }
.dots { stroke-width: 4; stroke-dasharray: 0 6.400; stroke-linecap: round; }
.ln { fill: none; vector-effect: non-scaling-stroke; }
.ln-g { stroke: #00e000; stroke-width: 1; }
.ln-g1 { stroke: #10c010; stroke-width: 1; }
.ln-g2 { stroke: #10c810; stroke-width: 1; }
.ln-c { stroke: #00e0f0; stroke-width: 2; }
.ln-c2 { stroke: #20e8e8; stroke-width: 1.500; }
.ln-c3 { stroke: #20e8e8; stroke-width: 1.500; stroke-dasharray: 9 11; }
.ln-m { stroke: #f000e0; stroke-width: 1.500; }
.ln-y { stroke: #f5b800; stroke-width: 2; }
.ln-y2 { stroke: #e4e000; stroke-width: 1; }
.ln-r2 { stroke: #e00000; stroke-width: 1; }
.ln-pk { stroke: #e0a0a0; stroke-width: 1; }
.ln-grey { stroke: #8a8a8a; stroke-width: 1; }
.dash { fill: none; vector-effect: non-scaling-stroke; stroke-width: 2; stroke-dasharray: 5 7; }
.dash-r { stroke: #7a1830; }
.dash-rb { stroke: #e01010; }
.dash-g { stroke: #1a7a40; }
.dash-bg { stroke: #00e000; }
.badge text { font-size: 11.5px; text-anchor: middle; }
.b-red rect { fill: #f00000; }
.b-red text { fill: #fff; }
.b-green rect { fill: #00d800; }
.b-green text { fill: #022; }
.b-cyan rect { fill: #00f0ff; }
.b-cyan text { fill: #024; }

.chart-foot {
  flex: 1;
  display: flex;
  align-items: center;
  gap: 2px;
  padding: 0 2px 0 1px;
  background: linear-gradient(#000, #333);
}
.foot-btn {
  width: 18px;
  height: 17px;
  display: flex;
  align-items: center;
  justify-content: center;
  background: #101820;
  border: 1px solid #33424d;
}
.foot-expand { width: 22px; margin-right: 2px; }
.foot-dollar { color: #cfe8ff; font-weight: bold; font-size: 12px; border-bottom: 2px solid #eee; }
.foot-arrow {
  width: 16px;
  height: 17px;
  text-align: center;
  line-height: 17px;
  font-size: 9px;
  color: #555;
  background: #1e1e1e;
}
.foot-hatch {
  width: 28px;
  height: 17px;
  background: repeating-linear-gradient(90deg, #183050 0 1px, #24486e 1px 2px);
}
.win-left .chart-foot { padding-right: 6px; }

/* trade column */
.trade-col {
  flex: none;
  position: relative;
  display: flex;
  flex-direction: column;
  background: #000;
  border-left: 2px dotted #555;
}
.tc-left { width: 289px; }
.tc-right { width: 373px; }
.drop-tri {
  position: absolute;
  top: 27px;
  left: 4px;
  border: 6px solid transparent;
  border-top: 7px solid #164a8a;
  border-bottom: 0;
}
.trade-wr { position: absolute; top: 27px; right: 1px; }
.trade-row { display: flex; gap: 4px; height: 22px; flex: none; margin-left: 21px; }
.r-first { margin-top: 3px; }
.r-second { margin-top: 5px; }
.tbtn {
  display: flex;
  align-items: center;
  justify-content: center;
  background: linear-gradient(#262a2c, #121415);
  border: 1px solid #3b4b56;
  color: #b8b8b8;
  font-size: 11.5px;
}
.t-buy { background: linear-gradient(#10351a, #0a1a0c); border-color: #2f5a3a; color: #00e000; }
.t-sell { background: linear-gradient(#2e1012, #1a0a0a); border-color: #5a2a2e; color: #f01010; }
.t-cancel { border-color: #3f4545; color: #666; }
.w-buy { width: 64px; }
.w-sell { width: 63px; }
.w-cancel { width: 68px; }
.w-rev { width: 63px; }
.w-flat { width: 54px; }

.qty-row { display: flex; align-items: center; height: 18px; margin: 6px 0 0 7px; flex: none; }
.help-ico {
  flex: none;
  width: 13px;
  height: 13px;
  line-height: 13px;
  text-align: center;
  border-radius: 50% 50% 50% 2px;
  background: #1a9ae0;
  color: #fff;
  font-size: 10px;
  font-weight: bold;
}
.lbl { color: #96640f; font-size: 11px; white-space: nowrap; }
.qty-row .lbl { margin: 0 4px 0 2px; width: 20px; }
.qty-in {
  position: relative;
  width: 75px;
  height: 18px;
  line-height: 17px;
  padding-right: 16px;
  text-align: right;
  color: #ffd000;
  font-size: 11.5px;
  background: linear-gradient(90deg, #0a0a0a, #1c2022);
  border: 1px solid #36454f;
}
.spin {
  position: absolute;
  right: 2px;
  top: 1px;
  width: 9px;
  height: 14px;
  background:
    linear-gradient(45deg, transparent 50%, #1a70d0 50%) 0 0/5px 5px no-repeat,
    linear-gradient(-45deg, transparent 50%, #1a70d0 50%) 4px 0/5px 5px no-repeat,
    linear-gradient(135deg, transparent 50%, #1a70d0 50%) 0 9px/5px 5px no-repeat,
    linear-gradient(-135deg, transparent 50%, #1a70d0 50%) 4px 9px/5px 5px no-repeat;
}
.qbtn {
  width: 28px;
  height: 18px;
  line-height: 16px;
  text-align: center;
  background: linear-gradient(#26292b, #141617);
  border: 1px solid #36454f;
  border-left: 0;
  color: #aaa;
  font-size: 11.5px;
}
.q-w { width: 34px; }

.tpl-row { display: flex; align-items: center; height: 19px; margin: 5px 0 0 6px; flex: none; }
.tpl-row .lbl { width: 49px; }
.tpl-sel {
  width: 112px;
  height: 19px;
  line-height: 18px;
  padding-left: 2px;
  color: #ffd000;
  font-size: 11.5px;
  border: 1px solid #a87a10;
  background: linear-gradient(135deg, #000 92%, #f0b400 92%);
}
.check {
  width: 13px;
  height: 14px;
  margin: 0 4px;
  line-height: 14px;
  text-align: center;
  font-size: 11px;
  color: #000;
  background: linear-gradient(#eee, #888);
}
.auto { color: #aaa; font-size: 11.5px; }

.pl-row { display: flex; height: 19px; flex: none; margin: 19px 1px 0 12px; background: #021a04; }
.pl-cell { flex: 1; line-height: 19px; padding-left: 4px; border: 1px solid #103010; color: #aaa; font-size: 11.5px; }
.pl-cell em { font-style: normal; color: #00d000; }
.stat-wrap { position: relative; margin: 1px 1px 0 12px; flex: none; }
.grey-dot {
  position: absolute;
  left: -7px;
  top: 7px;
  width: 6px;
  height: 6px;
  border-radius: 50%;
  background: #555;
}
.stat-row { display: flex; height: 38px; }
.stat { flex: 1; padding: 4px 0 0 4px; border-right: 1px solid #333; }
.stat small { display: block; font-size: 11.5px; color: #999; height: 15px; }
.stat b { font-size: 14px; font-weight: bold; }
.stat u { text-decoration: none; font-size: 11.5px; font-weight: normal; color: #aaa; }
.st-short { background: #2a0000; }
.st-avg { background: linear-gradient(#4a2424, #240808); }
.st-open { background: #021a04; border-right: 0; }
.s-y { color: #ffd000; }
.s-r { color: #f00; }
.s-g { color: #00e000; }
.avg-val { position: relative; margin-left: 7px; color: #d81818; }
.avg-val::before, .avg-val::after {
  content: "";
  position: absolute;
  top: 4px;
  border: 4px solid transparent;
}
.avg-val::before { left: -7px; border-left: 4px solid #c08000; border-right: 0; }
.avg-val::after { right: -7px; border-right: 4px solid #c08000; border-left: 0; }

/* ladder */
.ladder { flex: 1; min-height: 0; display: flex; margin-top: 1px; overflow: hidden; }
.tc-left .ladder { margin-left: 4px; }
.tc-right .ladder { margin-left: 3px; }
.lad-main { display: flex; flex-direction: column; min-height: 0; }
.tc-left .lad-main { --cols: 99px 40px 29px 40px 29px 30px; width: 267px; }
.tc-right .lad-main { --cols: 56px 81px 37px 57px 37px 84px; width: 352px; }
.lad-head, .lad-row { display: grid; grid-template-columns: var(--cols); }
.lad-head { height: 21px; flex: none; background: #1a2024; color: #aaa; line-height: 21px; font-size: 11.5px; position: relative; z-index: 1; }
.lad-head span { padding-left: 5px; border-right: 1px solid #0a0a0a; white-space: nowrap; overflow: hidden; }
.lad-head span:first-child { padding-left: 15px; position: relative; }
.lad-head span:first-child::before {
  content: "";
  position: absolute;
  left: 2px;
  top: 7px;
  width: 6px;
  height: 6px;
  border-radius: 50%;
  background: #555;
}
.lad-body { flex: 1; overflow: hidden; min-height: 0; }
.lad-rows { margin-top: -10px; }
.lad-row { height: 21px; }
.lad-row > span {
  position: relative;
  line-height: 20px;
  border-right: 1px solid #222;
  border-bottom: 1px solid #222;
  text-align: center;
  color: #fff;
  font-size: 11.5px;
}
.cell-bid { background: #021a04; }
.cell-ask { background: #240000; }
.cell-pl { background: #03342a; }
.lad-row > .cell-pl { color: #10e070; }
.lad-row > .cell-off { background: #1e1e1a; color: #555; }
.vol-bar {
  position: absolute;
  left: 0;
  top: 0;
  bottom: 0;
  background: linear-gradient(90deg, #8a7012, #a58a18);
  color: #ffd000;
  text-align: left;
  padding-left: 4px;
  overflow: visible;
}
.tc-right .vol-bar { background: #4a3c0c; }
.lad-side {
  width: 16px;
  flex: none;
  display: flex;
  flex-direction: column;
  background: linear-gradient(90deg, #0c0c0c, #2c2c2c);
}
.lad-zoom {
  height: 45px;
  display: flex;
  flex-direction: column;
  align-items: center;
  background: #c8c8c8;
}
.lad-zoom svg { display: block; }
.lad-zoom i {
  display: block;
  width: 10px;
  height: 15px;
  background:
    linear-gradient(45deg, transparent 50%, #333 50%) 0 1px/5px 5px no-repeat,
    linear-gradient(-45deg, transparent 50%, #333 50%) 5px 1px/5px 5px no-repeat,
    linear-gradient(135deg, transparent 50%, #333 50%) 0 9px/5px 5px no-repeat,
    linear-gradient(-135deg, transparent 50%, #333 50%) 5px 9px/5px 5px no-repeat;
}
.lad-scr {
  height: 16px;
  margin-top: 1px;
  text-align: center;
  line-height: 16px;
  background: #222;
  color: #999;
  font-size: 9px;
}
.lad-side .grow { flex: 1; }

/* side tabs */
.side-tabs {
  flex: 1;
  display: flex;
  flex-direction: column;
  align-items: flex-start;
  padding: 3px 0 0 5px;
  background: #333;
  border-left: 1px solid #555;
  overflow: hidden;
}
.win-right .side-tabs { padding-left: 4px; }
.tab {
  writing-mode: vertical-rl;
  transform: rotate(180deg);
  width: 15px;
  flex: none;
  padding: 4px 0;
  background: #262626;
  border: 1px solid #111;
  border-left: 2px solid #0a0a0a;
  border-top-left-radius: 7px;
  border-bottom-left-radius: 7px;
  color: #aaa;
  font-size: 11.5px;
  line-height: 13px;
  white-space: nowrap;
}
.tab:nth-child(2) { margin-top: 16px; }
.tab:nth-child(3) { margin-top: 11px; }
.tab:nth-child(4) { margin-top: 10px; }
.tab:nth-child(5) { margin-top: 4px; }
.tab:nth-child(6) { margin-top: 19px; }
.tab:nth-child(7) { margin-top: 4px; }
.tab:nth-child(8) { margin-top: 6px; }
.side-tabs .tab-on { color: #e8b800; }

/* pasted notes */
.note {
  position: absolute;
  background: #fff;
  border: 6px solid #f00;
  border-radius: 9px;
  color: #f00;
  font-family: Lato, "Open Sans", sans-serif;
  font-size: 18px;
  line-height: 24px;
  box-shadow: 2px 2px 4px rgba(0,0,0,.7);
  z-index: 5;
}
.note-left { left: 643px; top: 469px; width: 288px; height: 276px; padding: 8px 16px 0 11px; }
.note-right { left: 1529px; top: 476px; width: 358px; height: 249px; padding: 8px 16px 0 12px; }
```

FILE: script.js
```javascript
// data read off the chart, heights in px: letter is the colour, number the bar height
const series = {
  'L-vol': 'a13 a18 r31 a28 r13 a16 g17 r12 g16 g11 g14 a13 r17 a11 g16 g24 r15 g9 r9 g36 g88 r16 g56 r45 g23 g11 r24 r50 g33 r11 g7 g30 r18 g15 r11 r17 g8 g34 g167 r39 r45 r45 g9 r11 g15 r9 g26 a9 g7 r21 a17 r17 g10 g13 r7 r9 r58 r143 g109 r55 r31 r31 r67 g55 g92 r58 r26 a19 r46 r94 g48 g39 r29 r33 r24 g46 r58 r40 g61 g3',
  'L-adx': 'r20 r22 r22 r20 R33 R35 r33 r22 r23 r17 r12 r10 r10 r10 n0 G12 G17 G22 G25 G36 G45 G47 G50 g45 g43 G42 g38 g27 g25 g17 g10 g12 g7 g8 g3 R5 R5 G2 G22 G29 G17 g3 R3 R17 R25 R33 R38 R40 R42 R43 R50 R52 r47 r30 r33 r37 R50 R78 R95 R108 R115 R118 R115 r100 r68 r48 r38 r32 r30 r35 r20 n0 G12 g8 g3 G18 g17 g12 G17 G25',
  'R-adx': 'R2 R5 n0 G5 G8 g7 G11 G15 g13 g13 g7 g1 r1 R6 R11 r12 r12 r11 r12 r12 r10 r7 R12 R18 R21 r18 r18 r19 R23 R25 r25 R32 R36 R37 r32 r33 r30 R48 R73 R100 r65 r45 r41 r30 r14 r5 n0 G7 g6 G14 G25 G30 g27 g22 G27 G29 G42 G56 g55 g56 g55 G62 G66 g63 g44 g27 g22 g25 G31 G35 g32 G31 G33 G32 G33 G33 g20 R6 R40 R75'
};

// right volume is sparse, so x positions are listed
const rightVol = [[986,1,'g'],[1089,1,'r'],[1118,3,'r'],[1129,1,'g'],[1134,1,'g'],[1156,2,'g'],[1166,1,'g'],[1173,10,'r'],[1178,15,'r'],[1184,9,'r'],[1189,25,'g'],[1195,2,'r'],[1200,1,'r'],[1206,2,'g'],[1221,6,'r'],[1228,1,'r'],[1233,2,'r'],[1250,2,'r'],[1255,1,'r'],[1261,1,'r'],[1277,6,'g'],[1283,3,'r'],[1288,2,'r'],[1294,1,'g'],[1299,1,'g'],[1305,3,'g'],[1310,4,'a'],[1316,3,'r'],[1321,16,'r'],[1327,16,'r'],[1332,4,'g'],[1338,3,'g'],[1343,4,'g'],[1349,3,'a'],[1354,8,'r'],[1360,4,'g'],[1365,2,'g'],[1371,2,'g'],[1376,7,'a'],[1382,20,'r'],[1387,117,'r'],[1393,167,'r'],[1398,113,'r'],[1404,25,'r']];

const volColors = { g: '#00cc00', r: '#ff0000', a: '#aaaaaa' };
const adxColors = { G: '#00ff00', g: '#0b6b0b', R: '#ff0000', r: '#8a0000' };

function rectsFor(target, list, base, colors, flipRed) {
  let out = '';
  list.forEach(([x, h, c]) => {
    if (!h) return;
    const down = flipRed && /r/i.test(c);
    const y = down ? base : base - h;
    out += `<rect x="${x - 1}" y="${y}" width="2" height="${h}" fill="${colors[c]}"/>`;
  });
  document.querySelector(`[data-bars="${target}"]`).innerHTML = out;
}

function parse(str, x0, step) {
  return str.split(' ').map((tok, i) => [x0 + i * step, +tok.slice(1), tok[0]]);
}

rectsFor('L-vol', parse(series['L-vol'], 11, 6.44), 726, volColors, false);
rectsFor('L-adx', parse(series['L-adx'], 11, 6.44), 808, adxColors, true);
rectsFor('R-vol', rightVol, 726, volColors, false);
rectsFor('R-adx', parse(series['R-adx'], 969.3, 5.5), 825, adxColors, true);

// candles: [x, top, bottom, kind] in the chart's own units
const candles = {
  L: [[606,95,140,'h'],[330,145,160,'h'],[405,130,145,'h'],[250,165,175,'h'],[150,190,200,'h'],[70,198,208,'m'],[450,135,145,'h'],[500,135,150,'h'],[420,135,150,'m'],[638,98,135,'m'],[653,135,148,'m'],[682,135,152,'m'],[715,150,157,'m'],[897,185,233,'m'],[912,228,240,'m'],[928,225,242,'m'],[943,232,245,'m'],[1004,200,235,'h'],[990,235,255,'h'],[1035,205,225,'m'],[1082,240,258,'m'],
      [1096,218,255,'b'],[1111,208,228,'b'],[1172,208,243,'b'],[1218,228,240,'b'],[1234,218,228,'b'],[1127,204,215,'f'],[1141,214,232,'f'],[1157,230,243,'f'],[1187,208,233,'f'],[1203,232,245,'f']],
  R: [[182,130,145,'m'],[195,138,148,'m'],[210,140,150,'m'],[225,143,160,'m'],[243,143,160,'m'],[368,160,180,'m'],[460,190,198,'m'],[505,205,218,'m'],[545,210,225,'m'],[612,310,340,'m'],[628,345,375,'m'],[658,215,280,'m'],[675,265,285,'m'],[720,243,260,'m'],[767,258,275,'m'],[828,250,265,'m'],[843,265,285,'m'],[905,205,215,'m'],[921,215,235,'m'],[1013,225,250,'m'],[1028,248,265,'m'],
      [72,125,145,'h'],[120,122,135,'h'],[258,155,170,'h'],[380,178,185,'h'],[475,195,205,'h'],[642,230,380,'h'],[688,255,280,'h'],[797,240,260,'h'],[858,260,285,'h'],[889,208,255,'h'],[935,225,240,'h'],[966,195,225,'h'],[1043,230,265,'h'],[1074,200,222,'h'],[1120,205,222,'h'],[1136,192,205,'b'],[1151,192,205,'b'],
      [1106,200,215,'f'],[1182,183,195,'f'],[1198,200,220,'f'],[1213,220,272,'f'],[1229,265,325,'f'],[1244,328,358,'f']]
};
const wicks = { R: [[1197,140,235],[1182,143,183],[1213,272,340],[1229,325,340]] };

function candleSvg(key) {
  const style = {
    m: 'fill="#7a1a3a"',
    h: 'fill="none" stroke="#1f8a2a"',
    b: 'fill="#000" stroke="#00e000"',
    f: 'fill="#f00000"'
  };
  let out = '';
  candles[key].forEach(([x, t, b, k]) => {
    const wick = k === 'f' ? '#f00' : k === 'b' ? '#0e0' : k === 'm' ? '#7a1a3a' : '#1f8a2a';
    out += `<path d="M${x} ${t - 12}V${b + 12}" stroke="${wick}" class="ln" style="stroke-width:1"/>`;
    out += `<rect x="${x - 5}" y="${t}" width="10" height="${b - t}" ${style[k]} style="vector-effect:non-scaling-stroke"/>`;
  });
  (wicks[key] || []).forEach(([x, t, b]) => {
    out += `<path d="M${x} ${t}V${b}" stroke="#f00" class="ln" style="stroke-width:1"/>`;
  });
  document.querySelector(`[data-candles="${key}"]`).innerHTML = out;
}
candleSvg('L');
candleSvg('R');

// price ladders
const leftBars = { '-1': 8, 0: 22, 1: 24, 2: 24, 3: 22, 4: 20, 5: 26, 6: 28, 7: 30, 8: 27, 9: 29, 23: 26, 24: 26, 25: 23, 26: 19, 27: 12, 28: 11, 29: 5, 30: 1, 31: 1 };
const leftNums = { 7: 459, 8: 413, 9: 432, 23: 391, 24: 390 };
const rightBars = { 3: 8, 4: 6, 5: 16, 6: 29, 7: 17, 8: 4, 9: 10, 10: 20 };
const rightNums = { 6: 76 };

function plText(i) {
  if (i < 0) return '$6...';
  if (i === 0) return '$9...';
  if (i < 4) return '$1...';
  if (i < 7) return '$2...';
  if (i < 10) return '$3...';
  if (i === 23) return '$7...';
  if (i < 27) return '$8...';
  if (i < 31) return '$9...';
  return '$1,...';
}

function volCell(w, n) {
  if (!w) return '<span></span>';
  return `<span><span class="vol-bar" style="width:${w}px">${n || ''}</span></span>`;
}

// rows under the pasted notes are never seen, so their text is left out
function buildLadder(key) {
  const host = document.querySelector(`[data-ladder="${key}"]`);
  const heads = key === 'L'
    ? ['Orders', 'Volu...', 'Bi...', 'Price', 'A...', 'P/...']
    : ['Volume', 'Buy Orders', 'Bid ...', 'Price', 'Ask...', 'Sell Orders'];
  let rows = '';
  for (let i = -1; i < 34; i++) {
    if (key === 'L') {
      const hid = i >= 10 && i <= 22;
      rows += `<div class="lad-row"><span></span>${volCell(leftBars[i], leftNums[i])}<span class="cell-bid"></span><span>${hid ? '' : '12...'}</span><span class="cell-ask"></span><span class="cell-pl">${hid ? '' : plText(i)}</span></div>`;
    } else {
      const hid = i >= 10 && i <= 21;
      const price = hid ? '' : (1153.6 - i * 0.1).toFixed(1);
      const off = i > 24 ? ' class="cell-off"' : '';
      rows += `<div class="lad-row">${volCell(rightBars[i], rightNums[i])}<span></span><span class="cell-bid"></span><span${off}>${price}</span><span class="cell-ask"></span><span></span></div>`;
    }
  }
  host.innerHTML = `
    <div class="lad-main">
      <div class="lad-head">${heads.map(h => `<span>${h}</span>`).join('')}</div>
      <div class="lad-body"><div class="lad-rows">${rows}</div></div>
    </div>
    <div class="lad-side">
      <div class="lad-zoom">
        <svg width="15" height="15"><use href="#i-plus"/></svg><i></i><svg width="15" height="15"><use href="#i-minus"/></svg>
      </div>
      <div class="lad-scr">▲</div>
      <span class="grow"></span>
      <div class="lad-scr">▼</div>
    </div>`;
}
buildLadder('L');
buildLadder('R');
```
